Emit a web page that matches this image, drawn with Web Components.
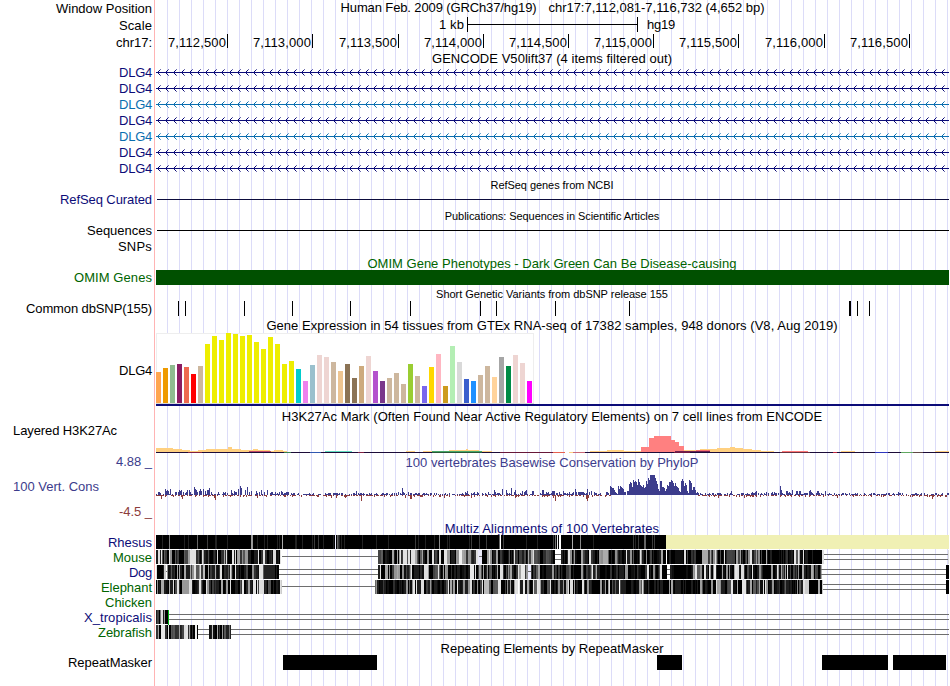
<!DOCTYPE html>
<html lang="en"><head><meta charset="utf-8"><title>Genome Browser</title>
<style>body{margin:0;background:#fff;overflow:hidden;font:13px/16px "Liberation Sans",Arial,sans-serif;color:#000}</style></head>
<body><genome-browser></genome-browser>
<script>
const ctx=document.createElement('canvas').getContext('2d');
/* Text set to a given advance width by adjusting its letter spacing. */
class FitText extends HTMLElement{
  connectedCallback(){
    const t=this.getAttribute('text'),w=+this.getAttribute('w'),s=+(this.getAttribute('size')||13);
    ctx.font=s+'px "Liberation Sans"';
    const ls=(w-ctx.measureText(t).width)/t.length;
    this.attachShadow({mode:'open'}).innerHTML=`<style>:host{display:inline-block;white-space:pre;font-size:${s}px;letter-spacing:${ls.toFixed(3)}px}</style><span></span>`;
    this.shadowRoot.querySelector('span').textContent=t;
  }
}
customElements.define('fit-text',FitText);

class TrackRow extends HTMLElement{
  connectedCallback(){
    const h=this.getAttribute('h');
    this.attachShadow({mode:'open'}).innerHTML=`<style>
    :host{display:grid;grid-template-columns:154px 795px;height:${h}px}
    .label{display:flex;justify-content:flex-end;align-items:center;padding-right:2px;height:${h}px;box-sizing:border-box}
    .data{box-sizing:border-box;height:${h}px;border-left:1px solid #ffb4b4;padding-left:1px;display:flex;justify-content:center;align-items:center;
      background:linear-gradient(90deg,transparent 11px,#dcdcf8 11px) 0 0/12px 100% content-box content-box}
    </style><div class="label"><slot name="label"></slot></div><div class="data"><slot></slot></div>`;
  }
}
customElements.define('track-row',TrackRow);

class TrackPlot extends HTMLElement{
  connectedCallback(){
    const y=this.getAttribute('y'),h=this.getAttribute('h');
    this.attachShadow({mode:'open'}).innerHTML=`<style>:host{display:block;width:793px;height:${h}px}svg{display:block}</style>
    <svg width="793" height="${h}" viewBox="156 ${y} 793 ${h}" shape-rendering="crispEdges">${plots[this.getAttribute('kind')](+y)}</svg>`;
  }
}
const R=(x,y,w,h,f)=>`<rect x="${x}" y="${y}" width="${w}" height="${h}" fill="${f}"/>`;
function rng(s){return()=>{s=(s*1664525+1013904223)>>>0;return s/4294967296}}

function arrows(y,c){
  const m=y+8;let o=R(156,m,793,1,c),d='',e='';
  for(let x=157;x<949;x+=8){for(const k of[1,-1]){d+=`M${x+1} ${m+k}h1v1h-1z`;d+=`M${x+2} ${m+2*k}h1v1h-1z`;e+=`M${x+3} ${m+3*k}h1v1h-1z`}}
  return o+`<path d="${d}" fill="${c}"/><path d="${e}" fill="${c}" opacity=".6"/>`;
}
/* Grey-scale alignment: spans are [from, to, darkness 0..1]; marks are [x, width, colour]. */
function barcode(y,seed,spans,marks){
  const r=rng(seed);let o='';
  for(const[a,b,d]of spans){
    o+=R(a,y,b-a,14,'#000');
    for(let x=a;x<b;){
      const w=Math.min(b-x,1+(r()<.35?1:0)+(r()<.12?1:0));
      let g=0;const p=r(),q=r();
      if(d===1)g=q<.05?60:q<.13?35:0;
      else if(p>d)g=q<.45?40+q*120:q<.78?100+q*90:190+q*40;
      else g=q<.3?30:q<.5?15:0;
      g=Math.round(g);if(g)o+=R(x,y,d===1?1:w,14,`rgb(${g},${g},${g})`);x+=w;
    }
  }
  for(const[x,w,c]of marks)o+=R(x,y,w,14,c);
  return o;
}
const dbl=(y,a,b)=>R(a,y+4,b-a,1,'#6e6e6e')+R(a,y+9,b-a,1,'#6e6e6e');
const one=(y,a,b)=>R(a,y+6,b-a,1,'#6e6e6e');

/* Step outline: [from, to, top, colour] */
const steps=(l,base)=>l.map(([a,b,t,c])=>R(a,t,b-a,base-t,c)).join('');

const gtexH=[31,35,38,39,36,29,37,59,67,63,70,69,67,68,61,54,66,59,39,42,34,22,38,48,46,41,32,39,25,37,47,32,22,25,30,19,39,27,17,36,49,17,57,41,24,22,28,37,26,46,37,48,40,22];
const gtexC='FFA54F EE9A00 8FBC8F 8B1C62 EE6A50 FF0000 CDB79E EEEE00 EEEE00 EEEE00 EEEE00 EEEE00 EEEE00 EEEE00 EEEE00 EEEE00 EEEE00 EEEE00 EEEE00 EEEE00 00CDCD EE82EE 9AC0CD EED5D2 EED5D2 CDB79E EEC591 8B7355 8B7355 CDAA7D EED5D2 B452CD 7A378B CDB79E CDB79E CDB79E 9ACD32 CDB79E 7A67EE FFD700 FFB6C1 CD9B1D B4EEB4 D9D9D9 3A5FCD 1E90FF CDB79E CDB79E FFD39B A6A6A6 008B45 EED5D2 EED5D2 FF00FF'.split(' ');

const plots={
  gene:y=>arrows(y,'#0c0c78'),
  geneAlt:y=>arrows(y,'#0a6eaf'),
  refseq:()=>R(157,199,792,1,'#0c0c3c'),
  seqs:()=>R(157,230,792,1,'#000'),
  omim:()=>R(156,270,793,15,'#005000'),
  snp:()=>[178,185,244,292,350,410,480,496,555,629,857,869].map(x=>R(x,301,1,15,'#000')).join('')+R(849,301,2,15,'#000'),
  gtex:()=>R(156,333,378,71,'#eee')+R(157,334,376,69,'#fff')+R(156,403,378,1,'#d8d8d8')+
    gtexH.map((h,i)=>R(156+7*i,403-h,5,h,'#'+gtexC[i])).join('')+R(156,404,793,2,'#0c0c78'),
  h3k:()=>{
    const Y='#ffd080',P='#ff8080';
    return steps([[156,173,448,Y],[173,182,449,Y],[182,190,450,Y],[190,198,451,Y],[198,206,450,Y],[206,228,449,Y],[228,232,447,Y],[232,241,449,Y],[241,253,450,Y],[253,258,449,Y],[258,270,450,Y],[270,274,451,Y],[274,283,450,Y],[283,287,451,Y],
    [249,271,451,'#c04868'],[325,352,451,'#60dcc0'],[406,415,451,Y],[423,449,451,Y],[449,479,450,Y],[466,468,449,Y],[479,492,451,Y],[432,482,451,'#48a868'],
    [590,607,451,Y],[607,624,450,Y],[624,642,451,Y],
    [684,700,450,Y],[700,717,449,Y],[717,730,448,Y],[730,735,447,Y],[735,743,448,Y],[743,752,449,Y],[752,761,450,Y],[761,774,451,Y],
    [641,649,447,P],[649,654,438,P],[654,671,436,P],[671,675,440,P],[675,679,442,P],[679,684,446,P],[696,710,450,'#f87070'],[675,710,451,'#702050'],[782,808,451,'#ff7878'],[841,855,451,Y],[935,949,451,Y]],452)
    +R(156,452,793,1,'#1c0c38')+[[188,14,'#802040'],[284,7,'#388050'],[310,11,'#3058b0'],[358,6,'#802040'],[432,50,'#285838'],[500,53,'#681838'],[553,12,'#e86050'],[565,4,'#fff'],[569,4,Y],[573,12,'#c86878'],[674,16,'#701840'],[780,30,'#683040'],[833,4,'#c02840'],[875,13,'#3038c0'],[901,12,'#60a860'],[913,10,'#604848']].map(a=>R(a[0],452,a[1],1,a[2])).join('');
  },
  phylo:()=>{
    const r=rng(77),keys=[[156,2],[164,4],[172,4],[188,3],[196,5],[210,2],[226,3],[240,6],[248,3],[262,2],[290,1.5],[300,.7],[320,1.2],[345,1],[360,1.2],[396,2],[410,1.3],[440,.7],[460,1.6],[490,2],[500,3],[520,3],[536,1.5],[546,3],[556,1.6],[572,2],[584,2.3],[600,1.6],[609,1.5]];
    const peak={170:6,187:5,194:8,195:6,196:5,240:9,241:7,238:6,261:5,267:5,281:4,356:4,402:7,467:4,494:5,502:6,506:5,511:7,515:5,526:5,542:5,543:5,563:4,575:6,587:6,756:4,780:9,781:5,792:5,796:4,731:4,755:3,797:4,810:5,817:4,898:3};
    const hump=[[610,9],[612,7],[615,3],[618,9],[620,9],[623,6],[625,3],[627,4],[629,11],[630,13],[632,8],[633,15],[636,13],[638,16],[640,10],[643,10],[646,14],[648,17],[650,20],[653,20],[655,17],[657,11],[658,6],[660,14],[662,8],[664,7],[667,10],[669,13],[671,15],[673,12],[675,12],[677,8],[679,4],[681,14],[682,16],[684,9],[685,12],[687,4],[689,15],[690,14],[692,5],[693,8],[695,5],[697,2]];
    let b='',d='';
    for(let x=156;x<949;x++){
      let h=0;
      if(x>=610&&x<=697){let i=0;while(i<hump.length-2&&hump[i+1][0]<=x)i++;h=hump[i][1]-(x>hump[i][0]?r()*3:0)}
      else{
        let a=x>697?(x<710?1:x<750?1.4:x<785?1.8:x<828?2.6:x<870?1.3:x<900?1:.9):1,
        i=0;if(x<610){while(i<keys.length-2&&keys[i+1][0]<=x)i++;a=keys[i][1]}
        h=r()<.68?.6+r()*a*1.4:0;if(peak[x])h=peak[x];
      }
      h=Math.round(h);if(h)b+=`M${x} ${495-h}h1v${h}h-1z`;
      if(x<612||x>697){if(r()<.58)d+=`M${x} 495h1v${r()<.22?2:1}h-1z`}
    }
    for(const[x,h]of[[161,4],[165,2],[182,4],[214,3],[215,5],[257,3],[331,3],[336,3],[345,3],[361,6],[390,2],[405,3],[410,4],[411,4],[444,3],[471,3],[515,3],[553,3],[555,6],[586,4],[587,6],[588,3],[718,3],[744,3],[837,3],[932,4],[933,2],[945,2]])d+=`M${x} 495h1v${h}h-1z`;
    return`<path d="${b}" fill="#3c3c8c"/><path d="${d}" fill="#8c3c3c"/>`;
  },
  rhesus:y=>barcode(y,5,[[156,666,1]],[[169,1,'#777'],[197,1,'#666'],[251,2,'#999'],[282,1,'#aaa'],[335,1,'#eef'],[337,1,'#666'],[439,1,'#888'],[499,1,'#666'],[500,1,'#fff'],[555,1,'#777'],[557,1,'#eee'],[559,2,'#fff'],[572,1,'#aaa'],[580,1,'#888'],[644,2,'#666']])+R(666,y,283,14,'#f0f0b4'),
  mouse:y=>barcode(y,91,[[156,281,.48],[378,410,.35],[410,462,.45],[462,478,.2],[482,555,.55],[561,640,.55],[640,702,.74],[702,760,.32],[760,822,.62]],[[158,2,'#ddd'],[190,6,'#e0e0e0'],[202,1,'#ddd'],[217,1,'#ddd'],[235,1,'#ddd'],[245,3,'#999'],[273,3,'#ddd'],[459,3,'#eee'],[478,4,'#e8e8f8'],[484,3,'#000'],[555,6,'#fff'],[603,5,'#aaa'],[666,1,'#fff'],[696,6,'#000'],[702,6,'#aaa'],[727,5,'#444'],[763,3,'#000'],[816,6,'#000'],[822,2,'#ddd']])+one(y,282,378)+one(y,479,482)+dbl(y,555,561)+dbl(y,824,948)+R(948,y,1,14,'#ddd'),
  dog:y=>barcode(y,222,[[156,279,.6],[378,410,.4],[410,520,.5],[520,532,.3],[532,600,.65],[600,662,.82],[670,692,.93],[692,745,.48],[745,821,.62]],[[157,6,'#000'],[164,2,'#ccc'],[166,1,'#fff'],[200,1,'#ddd'],[203,2,'#bbb'],[230,1,'#ddd'],[259,4,'#e4e4e4'],[264,11,'#222'],[277,2,'#000'],[424,4,'#ddd'],[470,4,'#e8e8e8'],[521,4,'#e8e8e8'],[528,3,'#eef'],[660,2,'#ddd'],[662,5,'#000'],[667,3,'#fff'],[741,3,'#ddd'],[714,2,'#eee'],[821,1,'#aaa']])+dbl(y,279,378)+dbl(y,667,670)+dbl(y,821,946)+one(y,528,531)+one(y,166,167)+R(946,y,3,14,'#000'),
  elephant:y=>barcode(y,3031,[[156,281,.6],[375,410,.68],[410,460,.55],[460,530,.62],[530,570,.5],[570,650,.72],[650,700,.93],[700,770,.55],[770,822,.7]],[[161,3,'#aaa'],[182,7,'#999'],[190,2,'#ddd'],[230,1,'#ddd'],[257,1,'#ddd'],[262,2,'#ddd'],[281,1,'#ccc'],[375,1,'#666'],[470,2,'#ddd'],[484,5,'#bbb'],[518,1,'#fff'],[570,3,'#ddd'],[619,1,'#fff'],[642,1,'#ddd'],[742,4,'#e4e4e4'],[805,4,'#ccc'],[822,1,'#ccc']])+one(y,282,375)+dbl(y,823,946)+R(946,y,3,14,'#000'),
  xtrop:y=>barcode(y,12,[[156,168,.95]],[[157,2,'#444'],[160,1,'#777'],[161,2,'#ddd'],[164,1,'#999'],[168,1,'#00b414']])+R(168,y,1,15,'#00b414')+dbl(y,169,949),
  zebra:y=>barcode(y,841,[[156,198,.25],[209,231,.6]],[[156,1,'#333'],[159,1,'#000'],[161,4,'#e8e8e8'],[165,2,'#333'],[184,2,'#ddd'],[191,1,'#000'],[193,1,'#000'],[195,2,'#eee'],[197,1,'#000'],[209,2,'#111'],[212,1,'#bbb'],[217,1,'#aaa'],[222,1,'#999'],[226,5,'#222'],[229,1,'#777']])+dbl(y,198,209)+dbl(y,231,949),
  repeat:()=>[[283,94],[657,25],[822,66],[893,53]].map(a=>R(a[0],655,a[1],15,'#000')).join('')
};
customElements.define('track-plot',TrackPlot);

class RulerTicks extends HTMLElement{
  connectedCallback(){
    const xs=[227,312,398,483,568,653,738,824,909];
    this.attachShadow({mode:'open'}).innerHTML=`<style>:host{display:flex;width:793px;height:16px}
    div{box-sizing:border-box;display:flex;justify-content:flex-end;height:14px;border-right:1px solid #000;padding-right:1px;line-height:18px;flex:none}</style>`+
    xs.map((x,i)=>`<div style="width:${x+1-(i?xs[i-1]+1:156)}px"><fit-text w="58" text="${['7,112,500','7,113,000','7,113,500','7,114,000','7,114,500','7,115,000','7,115,500','7,116,000','7,116,500'][i]}"></fit-text></div>`).join('');
  }
}
customElements.define('ruler-ticks',RulerTicks);

class GenomeBrowser extends HTMLElement{
  connectedCallback(){
    let y=0;
    const lab=(t,w,c='#000',st='')=>`<fit-text slot="label" text="${t}" w="${w}" style="color:${c};${st}"></fit-text>`;
    const title=(h,t,w,c='#000',s=13,pad=1,l='')=>{y+=h;return`<track-row h="${h}">${l}<fit-text text="${t}" w="${w}" size="${s}" style="color:${c};padding-top:${pad}px;margin-right:1px"></fit-text></track-row>`};
    const plot=(h,kind,l='')=>{const r=`<track-row h="${h}">${l}${kind?`<track-plot kind="${kind}" y="${y}" h="${h}"></track-plot>`:''}</track-row>`;y+=h;return r};
    const N='#0c0c78',G='#006400',B='#3c3c8c';
    let o=`<track-row h="17">${lab('Window Position',96)}<fit-text text="Human Feb. 2009 (GRCh37/hg19)" w="196" style="margin-top:-2px"></fit-text><fit-text text="chr17:7,112,081-7,116,732 (4,652 bp)" w="216" style="margin:-2px 0 0 12px"></fit-text></track-row>`;
    y=17;
    o+=`<track-row h="17">${lab('Scale',33)}<scale-bar></scale-bar></track-row>`;
    y=34;
    o+=`<track-row h="16">${lab('chr17:',36,'#000','padding-top:2px')}<ruler-ticks></ruler-ticks></track-row>`;
    y=50;
    o+=title(14,'GENCODE V50lift37 (4 items filtered out)',240,'#000',13,4);
    for(let i=0;i<7;i++){const a=i==2||i==4;o+=plot(16,a?'geneAlt':'gene',lab('DLG4',33,a?'#0a6eaf':N,'padding-top:2px'))}
    o+=title(17,'RefSeq genes from NCBI',123,'#000',11);
    o+=plot(14,'refseq',lab('RefSeq Curated',92,N));
    o+=title(17,'Publications: Sequences in Scientific Articles',215,'#000',11);
    o+=plot(14,'seqs',lab('Sequences',65));
    o+=plot(16,'',lab('SNPs',34,'#000','padding-top:2px'));
    o+=title(16,'OMIM Gene Phenotypes - Dark Green Can Be Disease-causing',369,G,13,4);
    o+=plot(15,'omim',lab('OMIM Genes',78,G));
    o+=title(16,'Short Genetic Variants from dbSNP release 155',232,'#000',11,2);
    o+=plot(15,'snp',lab('Common dbSNP(155)',126));
    o+=title(17,'Gene Expression in 54 tissues from GTEx RNA-seq of 17382 samples, 948 donors (V8, Aug 2019)',572,'#000',13,3);
    o+=plot(73,'gtex',lab('DLG4',33,'#000','padding-top:3px'));
    o+=title(18,'H3K27Ac Mark (Often Found Near Active Regulatory Elements) on 7 cell lines from ENCODE',541,'#000',13,4);
    o+=plot(29,'h3k',lab('Layered H3K27Ac',104,'#000','margin:-16px 35px 0 0'));
    o+=title(17,'100 vertebrates Basewise Conservation by PhyloP',293,B,13,2,lab('4.88 _',36,B));
    o+=plot(32,'phylo',lab('100 Vert. Cons',86,B,'margin-right:53px;padding-top:2px'));
    o+=plot(18,'',lab('-4.5 _',33,'#8c3c3c','padding-top:2px'));
    o+=title(15,'Multiz Alignments of 100 Vertebrates',215,N,13,3);
    [['Rhesus',44,'rhesus'],['Mouse',39,'mouse'],['Dog',23,'dog'],['Elephant',51,'elephant'],['Chicken',47,''],['X_tropicalis',68,'xtrop'],['Zebrafish',54,'zebra']].forEach((a,i)=>o+=plot(15,a[2],lab(a[0],a[1],[0,2,5].includes(i)?N:G)));
    o+=title(15,'Repeating Elements by RepeatMasker',223,'#000',13,3);
    o+=plot(15,'repeat',lab('RepeatMasker',84));
    o+=plot(16,'');
    this.attachShadow({mode:'open'}).innerHTML=`<style>:host{display:flex;flex-direction:column;width:949px;height:686px}</style>`+o;
  }
}
/* Scale bar: caption, bracketed length, assembly name. */
class ScaleBar extends HTMLElement{
  connectedCallback(){
    this.attachShadow({mode:'open'}).innerHTML=`<style>:host{display:flex;width:793px;height:17px;box-sizing:border-box;padding-left:283px}
    .bar{width:171px;height:15px;box-sizing:border-box;border:solid #000;border-width:0 1px;margin:0 9px 0 3px;display:flex;align-items:center}
    .bar i{display:block;height:1px;width:100%;background:#000}</style>
    <fit-text text="1 kb" w="25"></fit-text><div class="bar"><i></i></div><fit-text text="hg19" w="28"></fit-text>`;
  }
}
customElements.define('scale-bar',ScaleBar);
customElements.define('genome-browser',GenomeBrowser);
</script></body></html>
